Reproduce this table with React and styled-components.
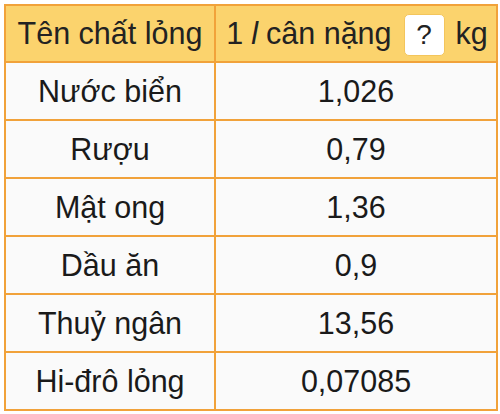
import React from "react";
import styled, { createGlobalStyle } from "styled-components";

const Global = createGlobalStyle`
  html, body { margin: 0; padding: 0; background: #ffffff; }
  body { font-family: "Liberation Sans", Arial, sans-serif; }
`;

const Page = styled.div`
  padding: 4px 2px 0 4px;
  width: 500px;
  height: 414px;
  box-sizing: border-box;
`;

const Table = styled.table`
  width: 494px;
  border-collapse: collapse;
  table-layout: fixed;
  border: 2px solid #f1a23a;
  background: #fafafa;
`;

const HeadCell = styled.th`
  height: 55px;
  padding: 0;
  background: #fbd36d;
  border: 2px solid #f1a23a;
  font-weight: 400;
  font-size: 30.5px;
  color: #222;
  text-align: center;
  vertical-align: middle;
  white-space: nowrap;
  width: ${(p) => p.$w || "auto"};
`;

const HeadInner = styled.div`
  display: flex;
  align-items: center;
  justify-content: center;
  gap: 8px;
  padding-left: 2px;
`;

const Italic = styled.span`
  font-style: italic;
`;

const QBox = styled.span`
  display: inline-flex;
  align-items: center;
  justify-content: center;
  width: 39px;
  height: 40px;
  background: #ffffff;
  border: 1px solid #f3c55c;
  border-radius: 5px;
  font-size: 28px;
  margin: 2px 3px 0 4px;
`;

const Cell = styled.td`
  height: 56px;
  padding: 0;
  border: 2px solid #f1a23a;
  font-size: 30.5px;
  color: #1a1a1a;
  text-align: center;
  vertical-align: middle;
  white-space: nowrap;
`;

const rows = [
  ["Nước biển", "1,026"],
  ["Rượu", "0,79"],
  ["Mật ong", "1,36"],
  ["Dầu ăn", "0,9"],
  ["Thuỷ ngân", "13,56"],
  ["Hi-đrô lỏng", "0,07085"],
];

export default function App() {
  return (
    <Page>
      <Global />
      <Table>
        <thead>
          <tr>
            <HeadCell $w="208px">Tên chất lỏng</HeadCell>
            <HeadCell>
              <HeadInner>
                <span>1</span>
                <Italic>l</Italic>
                <span>cân nặng</span>
                <QBox>?</QBox>
                <span>kg</span>
              </HeadInner>
            </HeadCell>
          </tr>
        </thead>
        <tbody>
          {rows.map(([name, val]) => (
            <tr key={name}>
              <Cell>{name}</Cell>
              <Cell>{val}</Cell>
            </tr>
          ))}
        </tbody>
      </Table>
    </Page>
  );
}
